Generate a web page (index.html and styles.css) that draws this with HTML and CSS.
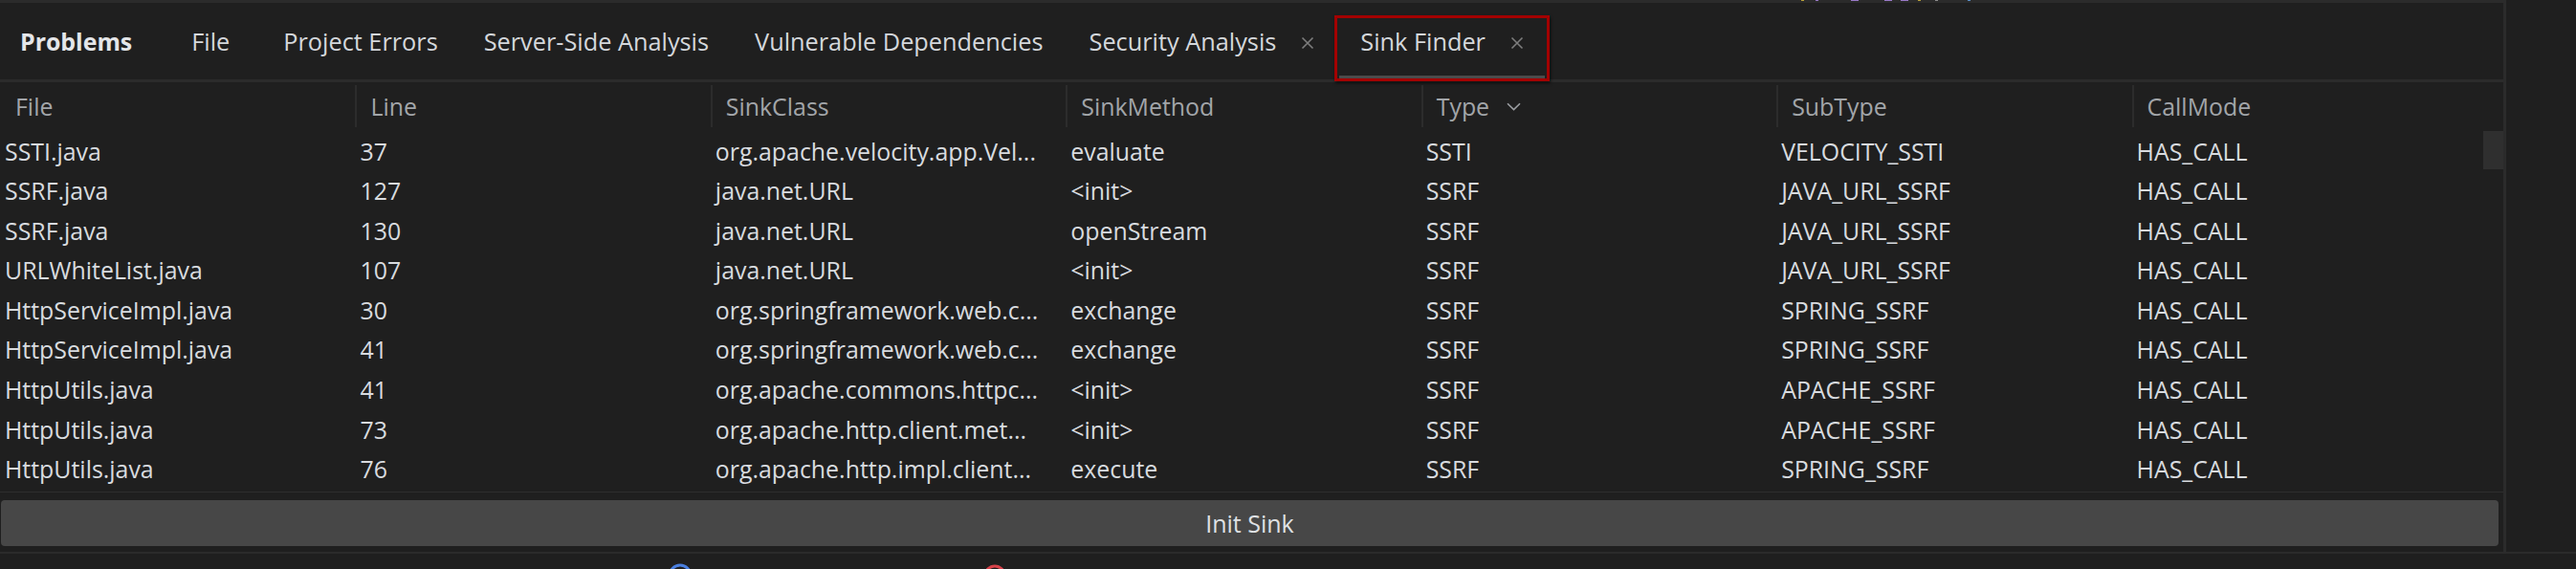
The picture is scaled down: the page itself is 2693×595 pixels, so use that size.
FILE: index.html
```html
<!DOCTYPE html>
<html>
<head>
<meta charset="utf-8">
<link rel="stylesheet" href="styles.css">
</head>
<body>
<div class="workspace">
  <div class="panel">
    <div class="topline">
      <span class="mark y m1"></span><span class="mark p m2"></span><span class="mark p w m3"></span><span class="mark p w m4"></span><span class="mark p w m5"></span><span class="mark y m6"></span><span class="mark g m7"></span><span class="mark b m8"></span>
    </div>
    <div class="tabbar">
      <div class="title">Problems</div>
      <div class="tab tab-file">File</div>
      <div class="tab">Project Errors</div>
      <div class="tab">Server-Side Analysis</div>
      <div class="tab">Vulnerable Dependencies</div>
      <div class="tab">Security Analysis<svg class="close" viewBox="0 0 14 14"><path d="M1.5 1.5L12.5 12.5M12.5 1.5L1.5 12.5"/></svg></div>
      <div class="tab active">Sink Finder<svg class="close" viewBox="0 0 14 14"><path d="M1.5 1.5L12.5 12.5M12.5 1.5L1.5 12.5"/></svg><span class="highlight"></span></div>
    </div>
    <div class="divider"></div>
    <div class="table">
      <div class="thead">
        <div class="th">File</div>
        <div class="th">Line</div>
        <div class="th">SinkClass</div>
        <div class="th">SinkMethod</div>
        <div class="th">Type<svg class="sort" viewBox="0 0 15 9"><path d="M1 1.2L7.5 7.6L14 1.2"/></svg></div>
        <div class="th">SubType</div>
        <div class="th">CallMode</div>
      </div>
      <div class="tbody">
        <div class="tr"><div class="td">SSTI.java</div><div class="td">37</div><div class="td">org.apache.velocity.app.Vel...</div><div class="td">evaluate</div><div class="td">SSTI</div><div class="td">VELOCITY_SSTI</div><div class="td">HAS_CALL</div></div>
        <div class="tr"><div class="td">SSRF.java</div><div class="td">127</div><div class="td">java.net.URL</div><div class="td">&lt;init&gt;</div><div class="td">SSRF</div><div class="td">JAVA_URL_SSRF</div><div class="td">HAS_CALL</div></div>
        <div class="tr"><div class="td">SSRF.java</div><div class="td">130</div><div class="td">java.net.URL</div><div class="td">openStream</div><div class="td">SSRF</div><div class="td">JAVA_URL_SSRF</div><div class="td">HAS_CALL</div></div>
        <div class="tr"><div class="td">URLWhiteList.java</div><div class="td">107</div><div class="td">java.net.URL</div><div class="td">&lt;init&gt;</div><div class="td">SSRF</div><div class="td">JAVA_URL_SSRF</div><div class="td">HAS_CALL</div></div>
        <div class="tr"><div class="td">HttpServiceImpl.java</div><div class="td">30</div><div class="td">org.springframework.web.c...</div><div class="td">exchange</div><div class="td">SSRF</div><div class="td">SPRING_SSRF</div><div class="td">HAS_CALL</div></div>
        <div class="tr"><div class="td">HttpServiceImpl.java</div><div class="td">41</div><div class="td">org.springframework.web.c...</div><div class="td">exchange</div><div class="td">SSRF</div><div class="td">SPRING_SSRF</div><div class="td">HAS_CALL</div></div>
        <div class="tr"><div class="td">HttpUtils.java</div><div class="td">41</div><div class="td">org.apache.commons.httpc...</div><div class="td">&lt;init&gt;</div><div class="td">SSRF</div><div class="td">APACHE_SSRF</div><div class="td">HAS_CALL</div></div>
        <div class="tr"><div class="td">HttpUtils.java</div><div class="td">73</div><div class="td">org.apache.http.client.met...</div><div class="td">&lt;init&gt;</div><div class="td">SSRF</div><div class="td">APACHE_SSRF</div><div class="td">HAS_CALL</div></div>
        <div class="tr"><div class="td">HttpUtils.java</div><div class="td">76</div><div class="td">org.apache.http.impl.client...</div><div class="td">execute</div><div class="td">SSRF</div><div class="td">SPRING_SSRF</div><div class="td">HAS_CALL</div></div>
        <div class="thumb"></div>
      </div>
    </div>
    <div class="actions">
      <button class="btn">Init Sink</button>
    </div>
  </div>
  <div class="vsep"></div>
  <div class="side"></div>
</div>
<div class="statusbar">
  <svg class="sicon blue" viewBox="0 0 26 26"><circle cx="13" cy="13" r="11"/></svg>
  <svg class="sicon red" viewBox="0 0 26 26"><circle cx="13" cy="13" r="10"/></svg>
</div>
</body>
</html>
```
FILE: styles.css
```css
html, body {
  margin: 0;
  padding: 0;
  background: #1f1f1f;
  overflow: hidden;
}
body {
  width: 2693px;
  height: 595px;
  font-family: "Open Sans", "Noto Sans", sans-serif;
  font-size: 24.9px;
  color: #d8dbdf;
}
.workspace {
  display: flex;
  height: 577px;
}
.panel {
  width: 2617px;
  display: flex;
  flex-direction: column;
}
.vsep {
  width: 3px;
  background: #2b2b2b;
}
.side {
  flex: 1;
  background: #1f1f1f;
}
.topline {
  height: 3px;
  background: #2b2b2b;
  display: flex;
  align-items: flex-start;
}
.mark {
  height: 1px;
  width: 3px;
}
.mark.w { width: 8px; }
.mark.y { background: #b8a13a; }
.mark.p { background: #9a7ac8; }
.mark.g { background: #8c8c8c; }
.mark.b { background: #5a90c8; }
.m1 { margin-left: 1883px; }
.m2 { margin-left: 12px; }
.m3 { margin-left: 34px; }
.m4 { margin-left: 27px; }
.m5 { margin-left: 9px; }
.m6 { margin-left: 10px; }
.m7 { margin-left: 15px; }
.m8 { margin-left: 31px; }
.tabbar {
  height: 80px;
  display: flex;
  align-items: stretch;
  line-height: 80px;
  white-space: nowrap;
  font-size: 25.3px;
}
.title {
  font-weight: 700;
  font-size: 24.9px;
  color: #e4e6e9;
  padding-left: 21px;
  padding-right: 38px;
}
.tab {
  position: relative;
  display: flex;
  align-items: center;
  gap: 26px;
  padding: 0 24px;
  color: #d4d7db;
}
.tab-file {
  padding-right: 32px;
}
.tab.active::after {
  content: "";
  position: absolute;
  left: 2px;
  right: 2px;
  bottom: 1px;
  height: 3px;
  background: #4b4b4b;
}
.close {
  width: 14px;
  height: 14px;
  margin-top: 4px;
  fill: none;
  stroke: #7d7d7d;
  stroke-width: 1.6;
}
.highlight {
  position: absolute;
  left: -3px;
  right: -3px;
  top: 13px;
  bottom: -2px;
  border: 3px solid #a30000;
  box-shadow: 1px 2px 3px rgba(0, 0, 0, 0.6);
  z-index: 2;
}
.divider {
  height: 3px;
  background: #2b2b2b;
}
.table {
  width: 2600px;
}
.thead {
  display: grid;
  grid-template-columns: repeat(7, 1fr);
  height: 50px;
  line-height: 50px;
  color: #a2a5a9;
}
.th {
  position: relative;
  padding-left: 16px;
  display: flex;
  align-items: center;
  gap: 18px;
}
.th + .th::before {
  content: "";
  position: absolute;
  left: 0;
  top: 3px;
  bottom: 3px;
  width: 2px;
  background: #2c2c2c;
}
.sort {
  width: 15px;
  height: 9px;
  margin-top: 1px;
  fill: none;
  stroke: #9a9da1;
  stroke-width: 1.6;
}
.tbody {
  position: relative;
  height: 376.5px;
  padding-top: 1.5px;
  width: 2617px;
  overflow: hidden;
  border-bottom: 1px solid #2e2e2e;
}
.tr {
  display: grid;
  grid-template-columns: repeat(7, 1fr);
  width: 2600px;
  height: 41.6px;
  line-height: 41.6px;
}
.td {
  padding-left: 5px;
  white-space: nowrap;
  overflow: hidden;
}
.thumb {
  position: absolute;
  right: 0;
  top: 1px;
  width: 21px;
  height: 40px;
  background: #2f2f2f;
}
.actions {
  padding: 8px 5px 0 1px;
}
.btn {
  display: block;
  width: 100%;
  height: 48px;
  border: none;
  border-radius: 4px;
  background: #474747;
  color: #dfe1e4;
  font-family: inherit;
  font-size: 25px;
  padding: 0;
}
.statusbar {
  height: 16px;
  border-top: 2px solid #2b2b2b;
  background: #1f1f1f;
  display: flex;
  align-items: flex-start;
  overflow: hidden;
}
.sicon {
  width: 26px;
  height: 26px;
  margin-top: 10px;
  fill: none;
  stroke-width: 3;
}
.sicon.blue {
  margin-left: 698px;
  stroke: #4a7fe0;
}
.sicon.red {
  margin-left: 303px;
  stroke: #d9434b;
}
```
